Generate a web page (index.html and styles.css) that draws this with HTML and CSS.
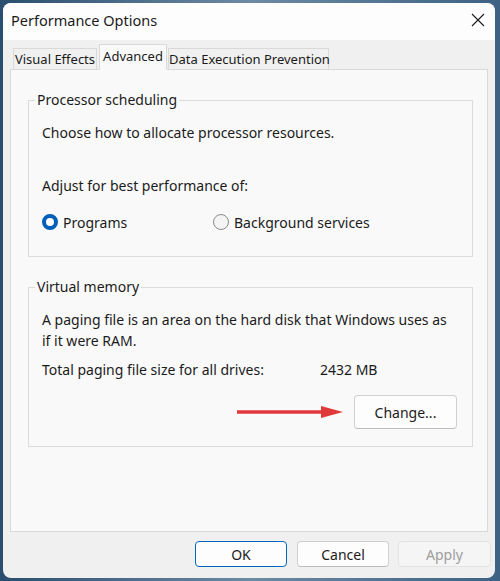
FILE: index.html
```html
<!DOCTYPE html>
<html lang="en">
<head>
    <meta charset="UTF-8">
    <meta name="viewport" content="width=device-width, initial-scale=1.0">
    <title>Performance Options</title>
    <link rel="stylesheet" href="styles.css">
</head>
<body>
    <div class="window">
        <div class="titlebar">
            <span class="title">Performance Options</span>
            <svg class="close" width="14" height="14" viewBox="0 0 14 14">
                <path d="M1 1 L13 13 M13 1 L1 13" stroke="#1a1a1a" stroke-width="1.1" fill="none"/>
            </svg>
        </div>

        <div class="tabs">
            <div class="tab">Visual Effects</div>
            <div class="tab active">Advanced</div>
            <div class="tab">Data Execution Prevention</div>
        </div>

        <div class="panel">
            <fieldset class="group">
                <legend>Processor scheduling</legend>
                <p class="line first">Choose how to allocate processor resources.</p>
                <p class="line adjust">Adjust for best performance of:</p>
                <div class="radios">
                    <label class="radio programs"><span class="dot checked"></span>Programs</label>
                    <label class="radio"><span class="dot"></span>Background services</label>
                </div>
            </fieldset>

            <fieldset class="group memory">
                <legend>Virtual memory</legend>
                <p class="para">A paging file is an area on the hard disk that Windows uses as if it were RAM.</p>
                <div class="total">
                    <span class="total-label">Total paging file size for all drives:</span>
                    <span>2432 MB</span>
                </div>
                <div class="change-row">
                    <!-- flecha roja que señala el botón -->
                    <svg class="arrow" width="106" height="14" viewBox="0 0 106 14">
                        <path d="M0 7 H86" stroke="#e0393b" stroke-width="3.5"/>
                        <path d="M84 1 L106 7 L84 13 Z" fill="#e0393b"/>
                    </svg>
                    <button class="btn change">Change...</button>
                </div>
            </fieldset>
        </div>

        <div class="footer">
            <button class="btn ok">OK</button>
            <button class="btn">Cancel</button>
            <button class="btn apply" disabled>Apply</button>
        </div>
    </div>
</body>
</html>
```

FILE: styles.css
```css
body {
    margin: 0;
    height: 581px;
    background: linear-gradient(90deg, #2b4e6e 0%, #6d8aa4 50%, #3d6283 100%);
    font-family: 'Noto Sans', 'Open Sans', sans-serif;
    font-size: 14px;
    color: #1b1b1b;
    overflow: hidden;
}

.window {
    position: relative;
    top: 3px;
    left: 3px;
    width: 492px;
    height: 575px;
    background-color: #f0f0f0;
    border-radius: 8px;
    overflow: hidden;
    display: flex;
    flex-direction: column;
}

.titlebar {
    height: 37px;
    background-color: #fdfdfd;
    display: flex;
    align-items: center;
    justify-content: space-between;
    padding: 0 10px 0 8px;
    flex-shrink: 0;
}

.title {
    font-size: 14.5px;
    margin-top: -3px;
}

.close {
    margin-top: -3px;
}

.tabs {
    display: flex;
    align-items: flex-end;
    height: 25px;
    margin: 4px 0 0 7px;
    position: relative;
    z-index: 1;
}

.tab {
    box-sizing: border-box;
    height: 21px;
    line-height: 20px;
    border: 1px solid #d9d9d9;
    border-bottom: none;
    background-color: #f0f0f0;
    font-size: 13px;
    white-space: nowrap;
    text-align: center;
}

.tab:first-child {
    margin-left: 3px;
    width: 84px;
}

.tab.active {
    height: 26px;
    line-height: 22px;
    background-color: #f9f9f9;
    margin: 0 0 -1px 2px;
    width: 68px;
    border-bottom: 1px solid #f9f9f9;
}

.tab:last-child {
    margin-left: 1px;
    width: 161px;
}

.panel {
    height: 463px;
    margin: 0 7px;
    background-color: #f9f9f9;
    border: 1px solid #d9d9d9;
    padding: 20px 14px 0 17px;
    box-sizing: border-box;
    display: flex;
    flex-direction: column;
    flex-shrink: 0;
}

.group {
    margin: 0;
    padding: 0 15px 0 13px;
    border: 1px solid #dcdcdc;
    min-width: 0;
}

.group legend {
    padding: 0 2px;
    margin-left: -7px;
    line-height: 20px;
}

.line {
    margin: 0;
    line-height: 20px;
}

.first {
    margin-top: 13px;
}

.adjust {
    margin-top: 33px;
}

.radios {
    display: flex;
    margin: 16px 0 24px;
    height: 20px;
    align-items: center;
}

.radio {
    display: flex;
    align-items: center;
    gap: 5px;
}

.programs {
    width: 171px;
}

.dot {
    width: 16px;
    height: 16px;
    border-radius: 50%;
    border: 1px solid #8a8a8a;
    background-color: #f4f4f4;
    box-sizing: border-box;
}

.dot.checked {
    border: 4.5px solid #005fb8;
    background-color: #fff;
}

.memory {
    margin-top: 20px;
}

.para {
    margin: 12px 0 0;
    line-height: 21px;
}

.total {
    display: flex;
    margin-top: 9px;
    line-height: 20px;
}

.total-label {
    width: 278px;
}

.change-row {
    display: flex;
    justify-content: flex-end;
    align-items: center;
    gap: 11px;
    margin: 15px 0 17px;
}

.btn {
    font-family: 'Noto Sans', 'Open Sans', sans-serif;
    font-size: 14px;
    color: #1b1b1b;
    background-color: #fdfdfd;
    border: 1px solid #d0d0d0;
    border-bottom-color: #bdbdbd;
    border-radius: 4px;
    padding: 0;
}

.change {
    width: 103px;
    height: 34px;
}

.footer {
    display: flex;
    justify-content: flex-end;
    gap: 10px;
    padding: 9px 4px 0 0;
}

.footer .btn {
    width: 92px;
    height: 26px;
}

.ok {
    border: 1px solid #0067c0;
}

.apply {
    color: #9d9d9d;
    background-color: #f5f5f5;
    border-color: #e3e3e3;
    margin-left: -1px;
    width: 93px !important;
}
```
